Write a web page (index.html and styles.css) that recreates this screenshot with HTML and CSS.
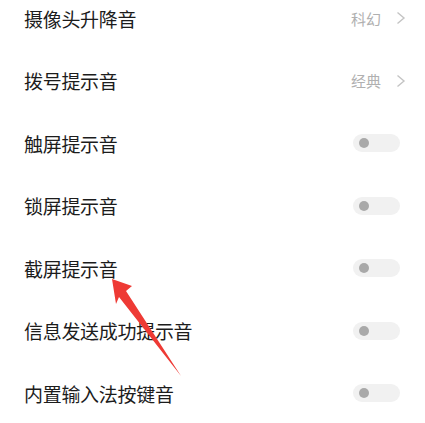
FILE: index.html
```html
<!DOCTYPE html>
<html lang="zh-CN">
<head>
<meta charset="utf-8">
<link rel="stylesheet" href="styles.css">
</head>
<body>
<div class="page">
  <ul class="list">
    <li class="row"><span class="label">摄像头升降音</span><span class="value">科幻<svg class="chev" width="10" height="14" viewBox="0 0 10 14"><path d="M1.5 1.5 L8 7 L1.5 12.5" fill="none" stroke="#c4c4c4" stroke-width="1.4"/></svg></span></li>
    <li class="row"><span class="label">拨号提示音</span><span class="value">经典<svg class="chev" width="10" height="14" viewBox="0 0 10 14"><path d="M1.5 1.5 L8 7 L1.5 12.5" fill="none" stroke="#c4c4c4" stroke-width="1.4"/></svg></span></li>
    <li class="row"><span class="label">触屏提示音</span><span class="toggle"><span class="knob"></span></span></li>
    <li class="row"><span class="label">锁屏提示音</span><span class="toggle"><span class="knob"></span></span></li>
    <li class="row"><span class="label">截屏提示音</span><span class="toggle"><span class="knob"></span></span></li>
    <li class="row"><span class="label">信息发送成功提示音</span><span class="toggle"><span class="knob"></span></span></li>
    <li class="row"><span class="label">内置输入法按键音</span><span class="toggle"><span class="knob"></span></span></li>
  </ul>
  <svg class="arrow" width="425" height="423" viewBox="0 0 425 423">
    <polygon points="112,279 132,286 126,291 181,376 119,297 116,304" fill="#ee3a35"/>
  </svg>
</div>
</body>
</html>
```
FILE: styles.css
```css
html, body {
  margin: 0;
  padding: 0;
  background: #ffffff;
}
.page {
  position: relative;
  width: 425px;
  height: 423px;
  overflow: hidden;
  font-family: "Noto Sans CJK SC", "Noto Sans", sans-serif;
}
.list {
  list-style: none;
  margin: -13px 0 0 0;
  padding: 0;
}
.row {
  height: 62.5px;
  display: flex;
  align-items: center;
  justify-content: space-between;
  padding: 0 19px 0 24px;
}
.label {
  font-size: 19px;
  color: #1c1c1c;
  letter-spacing: -0.3px;
}
.value {
  display: flex;
  align-items: center;
  gap: 15px;
  font-size: 15px;
  color: #b0b0b0;
}
.chev {
  display: block;
}
.toggle {
  width: 47px;
  height: 18px;
  border-radius: 9px;
  background: #f1f1f1;
  margin-right: 6px;
  display: flex;
  align-items: center;
  padding-left: 6px;
  box-sizing: border-box;
}
.knob {
  width: 10px;
  height: 10px;
  border-radius: 50%;
  background: #a9a9a9;
}
.arrow {
  position: absolute;
  left: 0;
  top: 0;
}
```
